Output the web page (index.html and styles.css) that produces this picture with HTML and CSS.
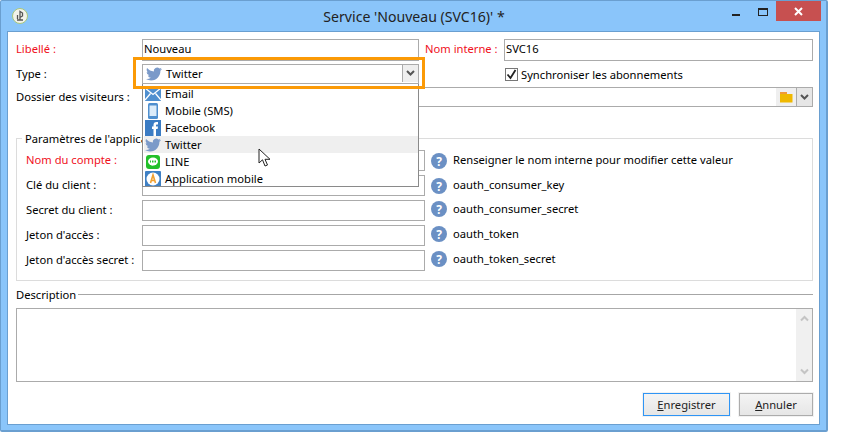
FILE: index.html
```html
<!DOCTYPE html>
<html lang="fr">
<head>
<meta charset="utf-8">
<title>Service</title>
<link rel="stylesheet" href="styles.css">
</head>
<body>
<div class="window">
  <header class="titlebar">
    <svg class="app-icon" width="16" height="16" viewBox="0 0 16 16"><circle cx="8" cy="8" r="7.5" fill="#f2f2ea" stroke="#a9c77a"/><path d="M5.5 11V7M8 12.5V3.5l2.5 1.5V8L8 9.5M11 12H5" fill="none" stroke="#555" stroke-width="1.3"/></svg>
    <h1 class="title">Service 'Nouveau (SVC16)' *</h1>
    <div class="controls">
      <span class="ctl-min"></span>
      <span class="ctl-max"></span>
      <span class="ctl-close"><svg width="9" height="9" viewBox="0 0 9 9"><path d="M1 1l7 7M8 1L1 8" stroke="#fff" stroke-width="2"/></svg></span>
    </div>
  </header>
  <main class="panel">
    <section class="top-grid">
      <label class="req first">Libellé :</label>
      <div class="input first"><span>Nouveau</span></div>
      <label class="req inner-label first">Nom interne :</label>
      <div class="input first"><span>SVC16</span></div>

      <label>Type :</label>
      <div class="input combo">
        <svg class="ico bird-main" viewBox="0 0 24 24"><path class="bird" d="M23.953 4.57a10 10 0 01-2.825.775 4.958 4.958 0 002.163-2.723c-.951.555-2.005.959-3.127 1.184a4.92 4.92 0 00-8.384 4.482C7.69 8.095 4.067 6.13 1.64 3.162a4.822 4.822 0 00-.666 2.475c0 1.71.87 3.213 2.188 4.096a4.904 4.904 0 01-2.228-.616v.06a4.923 4.923 0 003.946 4.827 4.996 4.996 0 01-2.212.085 4.936 4.936 0 004.604 3.417 9.867 9.867 0 01-6.102 2.105c-.39 0-.779-.023-1.17-.067a13.995 13.995 0 007.557 2.209c9.053 0 13.998-7.496 13.998-13.985 0-.21 0-.42-.015-.63A9.935 9.935 0 0024 4.59z"/></svg>
        <span class="grow">Twitter</span>
        <span class="arrow-btn"><svg width="9" height="7" viewBox="0 0 9 7"><path d="M1 1l3.5 3.5L8 1" fill="none" stroke="#555" stroke-width="2"/></svg></span>
      </div>
      <span></span>
      <div class="check-row">
        <span class="checkbox"><svg width="11" height="11" viewBox="0 0 11 11"><path d="M1.5 5.5l3 3.5 5-8" fill="none" stroke="#222" stroke-width="1.8"/></svg></span>
        <span>Synchroniser les abonnements</span>
      </div>

      <label>Dossier des visiteurs :</label>
      <div class="input folder-field">
        <span class="grow"></span>
        <span class="folder-btn"><svg width="13" height="12" viewBox="0 0 13 12"><path d="M0 1h7v2H0z" fill="#f09a37"/><path d="M0 3h12.500v8.500H0z" fill="#efb800"/></svg></span>
        <span class="drop-btn"><svg width="9" height="7" viewBox="0 0 9 7"><path d="M1 1l3.500 3.500L8 1" fill="none" stroke="#555" stroke-width="2"/></svg></span>
      </div>
    </section>

    <fieldset class="params">
      <legend>Paramètres de l'application</legend>
      <div class="param-grid">
        <label class="req">Nom du compte :</label>
        <div class="input"></div>
        <svg class="help" viewBox="0 0 16 16"><circle cx="8" cy="8" r="8" fill="#6b90c4"/><text x="8" y="12.500" text-anchor="middle" class="help-q">?</text></svg>
        <span>Renseigner le nom interne pour modifier cette valeur</span>

        <label>Clé du client :</label>
        <div class="input"></div>
        <svg class="help" viewBox="0 0 16 16"><circle cx="8" cy="8" r="8" fill="#6b90c4"/><text x="8" y="12.500" text-anchor="middle" class="help-q">?</text></svg>
        <span>oauth_consumer_key</span>

        <label>Secret du client :</label>
        <div class="input"></div>
        <svg class="help raised" viewBox="0 0 16 16"><circle cx="8" cy="8" r="8" fill="#6b90c4"/><text x="8" y="12.500" text-anchor="middle" class="help-q">?</text></svg>
        <span class="raised-text">oauth_consumer_secret</span>

        <label>Jeton d'accès :</label>
        <div class="input"></div>
        <svg class="help raised" viewBox="0 0 16 16"><circle cx="8" cy="8" r="8" fill="#6b90c4"/><text x="8" y="12.500" text-anchor="middle" class="help-q">?</text></svg>
        <span class="raised-text">oauth_token</span>

        <label>Jeton d'accès secret :</label>
        <div class="input"></div>
        <svg class="help raised" viewBox="0 0 16 16"><circle cx="8" cy="8" r="8" fill="#6b90c4"/><text x="8" y="12.500" text-anchor="middle" class="help-q">?</text></svg>
        <span class="raised-text">oauth_token_secret</span>
      </div>
    </fieldset>

    <div class="desc-head"><span>Description</span><i></i></div>
    <div class="textarea">
      <div class="scrollbar">
        <svg width="9" height="7" viewBox="0 0 9 7"><path d="M1 5.500L4.500 2 8 5.500" fill="none" stroke="#c4c4c4" stroke-width="2"/></svg>
        <svg width="9" height="7" viewBox="0 0 9 7"><path d="M1 1.500L4.500 5 8 1.500" fill="none" stroke="#c4c4c4" stroke-width="2"/></svg>
      </div>
    </div>

    <footer class="actions">
      <button class="btn primary"><u>E</u>nregistrer</button>
      <button class="btn"><u>A</u>nnuler</button>
    </footer>

    <ul class="dropdown">
      <li>
        <svg class="ico" viewBox="0 0 16 16"><rect y="1" width="16" height="14" fill="#4f8fcf"/><path d="M0 2l8 6.500L16 2M0 14l5.500-6.500M16 14l-5.500-6.500" fill="none" stroke="#fff" stroke-width="1.300"/></svg>
        Email
      </li>
      <li>
        <svg class="ico" viewBox="0 0 16 16"><rect x="3" width="10" height="16" rx="1.500" fill="#4f8fcf"/><rect x="4.500" y="2.500" width="7" height="10.500" fill="#dcecfa"/></svg>
        Mobile (SMS)
      </li>
      <li>
        <svg class="ico" viewBox="0 0 16 16"><rect width="16" height="16" fill="#3b7cc4"/><path d="M8.500 16V9H7V6.500h1.500V5c0-2 1-3 3-3h1.500v2.500H12c-.7 0-1 .3-1 1v1h2l-.4 2.500H11v7z" fill="#fff"/></svg>
        Facebook
      </li>
      <li class="hover">
        <svg class="ico" viewBox="0 0 24 24"><path class="bird" d="M23.953 4.57a10 10 0 01-2.825.775 4.958 4.958 0 002.163-2.723c-.951.555-2.005.959-3.127 1.184a4.92 4.92 0 00-8.384 4.482C7.69 8.095 4.067 6.13 1.64 3.162a4.822 4.822 0 00-.666 2.475c0 1.71.87 3.213 2.188 4.096a4.904 4.904 0 01-2.228-.616v.06a4.923 4.923 0 003.946 4.827 4.996 4.996 0 01-2.212.085 4.936 4.936 0 004.604 3.417 9.867 9.867 0 01-6.102 2.105c-.39 0-.779-.023-1.17-.067a13.995 13.995 0 007.557 2.209c9.053 0 13.998-7.496 13.998-13.985 0-.21 0-.42-.015-.63A9.935 9.935 0 0024 4.59z"/></svg>
        Twitter
      </li>
      <li>
        <svg class="ico" viewBox="0 0 16 16"><rect x="1" y="1" width="14" height="14" rx="3" fill="#22c02a"/><ellipse cx="8" cy="7.500" rx="5" ry="4" fill="#fff"/><path d="M6 12l2-1.500h2z" fill="#fff"/><path d="M5.500 6.500v2M7.500 6.500v2M9 8.500v-2M10.500 6.500v2" stroke="#22c02a"/></svg>
        LINE
      </li>
      <li>
        <svg class="ico" viewBox="0 0 16 16"><rect width="16" height="16" rx="1" fill="#3f80c4"/><circle cx="8" cy="8" r="6.500" fill="#fff"/><path d="M5.500 12L8 4l2.500 8M6.500 9.500h3" fill="none" stroke="#f2a030" stroke-width="1.600"/></svg>
        Application mobile
      </li>
    </ul>
    <div class="highlight"></div>
    <svg class="cursor" width="14" height="20" viewBox="0 0 14 20"><path d="M1 1v14l3.500-3.200L7 18l2.500-1-2.500-5.700h5z" fill="#fff" stroke="#222" stroke-width="1"/></svg>
  </main>
</div>
</body>
</html>
```

FILE: styles.css
```css
* { box-sizing: border-box; }
html, body { margin: 0; padding: 0; background: #fff; }
body {
  width: 841px;
  height: 448px;
  overflow: hidden;
  font-family: "Noto Sans", sans-serif;
  font-size: 11.2px;
  color: #000;
}
.window {
  width: 828px;
  height: 432px;
  display: flex;
  flex-direction: column;
  background: #8ac5fa;
  border: 1px solid #6a9fd0;
  border-width: 1px 2px 2px 1px;
  border-radius: 2px;
}
.titlebar {
  height: 30px;
  flex: none;
  display: flex;
  align-items: center;
  padding-left: 11px;
}
.app-icon { flex: none; }
.title {
  flex: 1;
  margin: 0;
  padding-left: 68px;
  font-size: 14.1px;
  font-weight: 400;
  text-align: center;
  color: #222;
}
.controls {
  display: flex;
  align-items: flex-start;
  align-self: flex-start;
  flex: none;
}
.ctl-min { width: 8px; height: 2px; margin-top: 13px; margin-right: 18px; background: #222; }
.ctl-max { width: 10px; height: 8px; margin-top: 7px; margin-right: 8px; border: 1px solid #222; border-top-width: 2px; }
.ctl-close {
  width: 45px;
  height: 20px;
  margin-right: 5px;
  background: #c75050;
  display: flex;
  align-items: center;
  justify-content: center;
}
.panel {
  flex: 1;
  margin: 0 6px 5px 6px;
  padding: 7px 6px 0 8px;
  background: #fff;
  border: 1px solid #6a9fd0;
  position: relative;
}
label { white-space: nowrap; padding-bottom: 2px; }
label.first { padding-bottom: 4px; }
.req { color: #f0101c; }
.top-grid {
  display: grid;
  grid-template-columns: 126px 277px 85px 1fr;
  grid-template-rows: 22px 20px 20px;
  row-gap: 3px;
  align-items: center;
}
.inner-label { padding-left: 6px; }
.input {
  height: 100%;
  border: 1px solid #ababab;
  background: #fff;
  display: flex;
  align-items: center;
  padding-left: 1px;
  min-width: 0;
}
.input.first { padding-bottom: 3px; }
.combo { padding-left: 3px; padding-bottom: 1px; }
.grow { flex: 1; }
.ico { width: 16px; height: 16px; flex: none; }
.bird { fill: #7b9ac9; }
.bird-main { margin-right: 4px; }
.arrow-btn {
  width: 16px;
  height: 100%;
  background: #efefef;
  border-left: 1px solid #ababab;
  display: flex;
  align-items: center;
  justify-content: center;
}
.check-row { display: flex; align-items: center; padding-left: 1px; gap: 3px; }
.checkbox {
  width: 13px;
  height: 13px;
  border: 1px solid #777;
  display: flex;
  align-items: center;
  justify-content: center;
  background: #fff;
}
.folder-field {
  grid-column: 2 / 5;
  padding-left: 0;
}
.folder-btn {
  width: 20px;
  height: 100%;
  background: #efefef;
  display: flex;
  align-items: center;
  justify-content: center;
}
.drop-btn {
  width: 16px;
  height: 100%;
  background: #e6e6e6;
  border-left: 1px solid #ababab;
  display: flex;
  align-items: center;
  justify-content: center;
}
.params {
  margin: 23px 0 0;
  padding: 3px 0 9px 9px;
  border: 1px solid #dcdcdc;
  min-width: 0;
}
.params legend {
  margin-left: -4px;
  padding: 0 3px;
  line-height: 17px;
}
.param-grid {
  display: grid;
  grid-template-columns: 116px 283px 22px 1fr;
  grid-auto-rows: 21px;
  row-gap: 4px;
  align-items: center;
}
.param-grid > span { padding: 0 0 2px 6px; white-space: nowrap; }
.help { width: 22px; height: 16px; padding-left: 6px; display: block; overflow: visible; }
.raised { transform: translateY(-2px); }
.param-grid > .raised-text { padding-bottom: 4px; }
.help-q { font: 700 12px "Noto Sans", sans-serif; fill: #fff; }
.desc-head {
  display: flex;
  align-items: center;
  gap: 2px;
  height: 17px;
  margin-top: 5px;
}
.desc-head i { flex: 1; height: 1px; background: #a6a6a6; }
.textarea {
  height: 74px;
  margin-top: 5px;
  border: 1px solid #ababab;
  display: flex;
  justify-content: flex-end;
  background: #fff;
}
.scrollbar {
  width: 16px;
  background: #f0f0f0;
  display: flex;
  flex-direction: column;
  justify-content: space-between;
  align-items: center;
  padding: 6px 0;
}
.actions {
  display: flex;
  justify-content: flex-end;
  gap: 9px;
  margin-top: 11px;
}
.btn {
  height: 23px;
  padding: 0;
  width: 74px;
  font: inherit;
  color: #222;
  background: linear-gradient(#f4f4f4, #e6e6e6);
  border: 1px solid #acacac;
  outline: 1px solid #f2f2f2;
}
.btn.primary {
  width: 87px;
  border: 1px solid #2f95f5;
}
.dropdown {
  position: absolute;
  left: 134px;
  top: 52px;
  width: 277px;
  height: 103px;
  margin: 0;
  padding: 1px 0 0 2px;
  list-style: none;
  background: #fff;
  border: 1px solid #8a8a8a;
  border-top: 0;
  overflow: hidden;
}
.dropdown li {
  height: 17px;
  margin-left: -1px;
  padding-left: 1px;
  display: flex;
  align-items: center;
  gap: 4px;
  white-space: nowrap;
}
.dropdown .hover { background: #efefef; }
.highlight {
  position: absolute;
  left: 125px;
  top: 25px;
  width: 292px;
  height: 32px;
  border: 3px solid #fb9a06;
  pointer-events: none;
}
.cursor {
  position: absolute;
  left: 250px;
  top: 116px;
}
```
